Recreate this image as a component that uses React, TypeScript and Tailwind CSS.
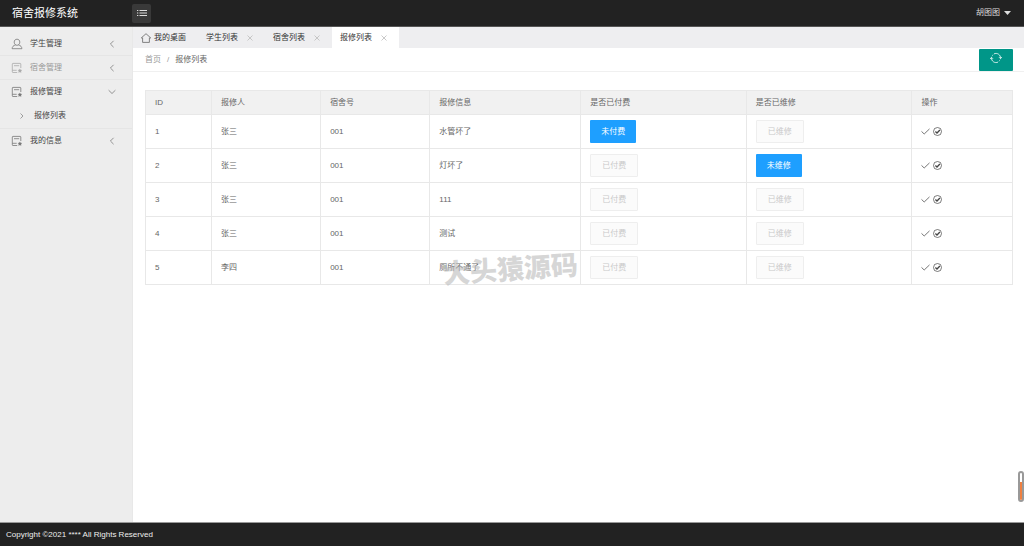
import React, { useState } from 'react';

interface Repair {
  id: number;
  student: string;
  room: string;
  info: string;
  paid: boolean;
  fixed: boolean;
}

const initialRepairs: Repair[] = [
  { id: 1, student: '张三', room: '001', info: '水管坏了', paid: false, fixed: true },
  { id: 2, student: '张三', room: '001', info: '灯坏了', paid: true, fixed: false },
  { id: 3, student: '张三', room: '001', info: '111', paid: true, fixed: true },
  { id: 4, student: '张三', room: '001', info: '测试', paid: true, fixed: true },
  { id: 5, student: '李四', room: '001', info: '厕所不通了', paid: true, fixed: true },
];

const columns = [
  { title: 'ID', width: 'w-[7.6%]' },
  { title: '报修人', width: 'w-[12.6%]' },
  { title: '宿舍号', width: 'w-[12.6%]' },
  { title: '报修信息', width: 'w-[17.4%]' },
  { title: '是否已付费', width: 'w-[19.1%]' },
  { title: '是否已维修', width: 'w-[19.1%]' },
  { title: '操作', width: 'w-[11.6%]' },
];

const UserIcon = () => (
  <svg className="size-3" viewBox="0 0 12 12" fill="none" stroke="currentColor" strokeWidth="0.8">
    <path d="M6 1.200c1.700 0 2.800 1.200 2.800 2.900S7.700 7.300 6 7.300 3.200 5.800 3.200 4.100 4.300 1.200 6 1.200z" />
    <path d="M4.500 6.900C2.300 7.500 1.200 8.800 1.100 10.700h9.800c-.1-1.900-1.200-3.200-3.400-3.800" />
  </svg>
);

const FormIcon = () => (
  <svg className="size-3" viewBox="0 0 12 12" fill="none" stroke="currentColor" strokeWidth="0.8">
    <path d="M6.200 10.500H1.900a.6.6 0 0 1-.6-.6V2a.6.6 0 0 1 .6-.6h7.300a.6.6 0 0 1 .6.600v4" />
    <path d="M3 3.700h5.200M1.300 8.300h4.400" />
    <path d="M8.900 6.900l.6 1.100 1.300.2-.9.900.2 1.300-1.200-.6-1.200.6.2-1.300-.9-.9 1.300-.2z" fill="currentColor" strokeWidth="0.4" />
  </svg>
);

const HomeIcon = () => (
  <svg className="size-3" viewBox="0 0 12 12" fill="none" stroke="#666" strokeWidth="0.8">
    <path d="M1.300 5.900 6 1.700l4.700 4.200H9.400v4.500H2.600V5.900z" strokeLinejoin="round" />
  </svg>
);

const CloseIcon = () => (
  <svg className="size-2" viewBox="0 0 8 8" fill="none" stroke="currentColor" strokeWidth="0.8">
    <path d="M1.500 1.500l5 5M6.500 1.500l-5 5" />
  </svg>
);

const Chevron = ({ open = false }: { open?: boolean }) => (
  <svg className="size-2" viewBox="0 0 8 8" fill="none" stroke="#888" strokeWidth="0.9">
    <path d={open ? 'M.6 2.200 4 5.500l3.400-3.300' : 'M5.600.8 2.400 4l3.200 3.200'} />
  </svg>
);

const ListIcon = () => (
  <svg className="h-2 w-[10px]" viewBox="0 0 10 8" fill="none" stroke="currentColor" strokeWidth="1">
    <path d="M2.500 1.500H10M2.500 4H10M2.500 6.500H10M0 1.500h1.300M0 4h1.300M0 6.500h1.300" />
  </svg>
);

const RefreshIcon = () => (
  <svg className="size-3" viewBox="0 0 12 12" fill="none" stroke="currentColor" strokeWidth="0.8">
    <path d="M4 1.900a4.500 4.500 0 0 1 6.500 4.300M8 10.100A4.500 4.500 0 0 1 1.500 5.800" />
    <path d="M9 5.200l1.500 1.500 1.300-1.600M.2 6.900l1.300-1.600L3 6.800" />
    <path d="M2 4.200 3.100 2.600M10 7.800 8.900 9.400" strokeDasharray="1 0.600" />
  </svg>
);

const CheckIcon = () => (
  <svg className="size-[9px]" viewBox="0 0 9 9" fill="none" stroke="#666" strokeWidth="0.9">
    <path d="M.5 4.400 3.200 7 8.500 1.900" />
  </svg>
);

const CheckCircleIcon = () => (
  <svg className="size-[9px]" viewBox="0 0 9 9" fill="none" stroke="currentColor">
    <circle cx="4.500" cy="4.500" r="4" strokeWidth="0.7" />
    <path d="M2.400 4.500 4 6l2.900-3" strokeWidth="1.300" />
  </svg>
);

const menu = [
  { title: '学生管理', icon: UserIcon, tone: 'text-[#444]', iconTone: 'text-[#777]' },
  { title: '宿舍管理', icon: FormIcon, tone: 'text-[#999]', iconTone: 'text-[#aaa]' },
  { title: '报修管理', icon: FormIcon, tone: 'text-[#444]', iconTone: 'text-[#777]', children: ['报修列表'] },
  { title: '我的信息', icon: FormIcon, tone: 'text-[#444]', iconTone: 'text-[#777]' },
];

interface StatusButtonProps {
  done: boolean;
  doneText: string;
  todoText: string;
  onClick: () => void;
}

const StatusButton: React.FC<StatusButtonProps> = ({ done, doneText, todoText, onClick }) =>
  done ? (
    <button disabled className="block h-[23px] rounded-[1px] border border-[#eee] bg-[#fbfbfb] px-[11px] text-[#c9c9c9]">
      {doneText}
    </button>
  ) : (
    <button onClick={onClick} className="block h-[23px] rounded-[1px] bg-[#1e9fff] px-[11px] text-white">
      {todoText}
    </button>
  );

const Sidebar = () => {
  const [opened, setOpened] = useState('报修管理');

  return (
    <nav className="w-[133px] shrink-0 border-r border-[#e8e8e8] bg-[#ededed] pt-[5px]">
      <ul>
        {menu.map((item) => (
          <li key={item.title} className="border-b border-[#e5e5e5] last:border-b-0">
            <button
              onClick={() => setOpened(opened === item.title ? '' : item.title)}
              className={`flex h-[23px] w-full items-center pr-4 pl-[11px] ${item.tone}`}
            >
              <span className={item.iconTone}>
                <item.icon />
              </span>
              <span className="ml-[7px] flex-1 text-left">{item.title}</span>
              <Chevron open={opened === item.title} />
            </button>
            {item.children && opened === item.title && (
              <ul>
                {item.children.map((child) => (
                  <li key={child}>
                    <a href="#" className="flex h-[25px] items-center gap-2 pl-[18px] text-[#444]">
                      <svg className="size-2" viewBox="0 0 8 8" fill="none" stroke="#888" strokeWidth="0.8">
                        <path d="M2.500 1.500 5 4 2.500 6.500" />
                      </svg>
                      {child}
                    </a>
                  </li>
                ))}
              </ul>
            )}
          </li>
        ))}
      </ul>
    </nav>
  );
};

const Tabs = () => {
  const [tabs, setTabs] = useState(['学生列表', '宿舍列表', '报修列表']);
  const [active, setActive] = useState('报修列表');

  return (
    <div className="flex h-[21px] bg-[#eeeef0] pl-[3px] text-[#333]">
      <button onClick={() => setActive('')} className="flex items-center gap-[2px] px-1">
        <HomeIcon />
        我的桌面
      </button>
      <div className="flex pl-2">
        {tabs.map((tab) => (
          <div key={tab} className={`flex w-[67px] items-center gap-2 pl-2 ${tab === active ? 'bg-white' : ''}`}>
            <button onClick={() => setActive(tab)}>{tab}</button>
            <button
              aria-label={`关闭${tab}`}
              onClick={() => setTabs(tabs.filter((t) => t !== tab))}
              className="text-[#bbb]"
            >
              <CloseIcon />
            </button>
          </div>
        ))}
      </div>
    </div>
  );
};

const App: React.FC = () => {
  const [repairs, setRepairs] = useState(initialRepairs);

  const update = (id: number, patch: Partial<Repair>) => {
    setRepairs(repairs.map((r) => (r.id === id ? { ...r, ...patch } : r)));
  };

  return (
    <div className="relative flex min-h-screen flex-col bg-white font-['Liberation_Sans','Noto_Sans_CJK_SC',sans-serif] text-[8px] leading-3 text-[#666]">
      <header className="flex h-[27px] items-center border-b border-[#555] bg-[#222] text-white">
        <h1 className="w-[132px] pl-3 text-[11px]">宿舍报修系统</h1>
        <button aria-label="菜单" className="flex h-[19px] w-[19px] items-center justify-center rounded-[2px] bg-[#393939] text-[#ddd]">
          <ListIcon />
        </button>
        <button className="mr-[13px] ml-auto flex items-center gap-1 text-[#ddd]">
          胡图图
          <svg className="h-1 w-[7px]" viewBox="0 0 7 4" fill="currentColor">
            <path d="M0 0h7L3.500 4z" />
          </svg>
        </button>
      </header>

      <div className="flex flex-1">
        <Sidebar />
        <main className="min-w-0 flex-1">
          <Tabs />
          <div className="flex h-6 items-center justify-between border-b border-[#f0f0f0] pr-[11px] pl-3">
            <div className="flex gap-[6px]">
              <a href="#" className="text-[#999]">首页</a>
              <span className="text-[#999]">/</span>
              <a href="#">报修列表</a>
            </div>
            <button aria-label="刷新" className="flex h-[22px] w-[34px] items-start justify-center rounded-[1px] bg-[#009688] pt-[3px] text-white">
              <RefreshIcon />
            </button>
          </div>

          <div className="relative pt-[18px] pr-[11px] pl-3">
            <table className="w-full table-fixed border-collapse border border-[#e8e8e8] text-left">
              <thead>
                <tr className="h-6 bg-[#f1f1f1]">
                  {columns.map((col) => (
                    <th key={col.title} className={`border border-[#e8e8e8] px-[9px] font-normal ${col.width}`}>
                      {col.title}
                    </th>
                  ))}
                </tr>
              </thead>
              <tbody>
                {repairs.map((r) => (
                  <tr key={r.id} className="h-[34px] border-b border-[#e8e8e8] [&>td]:border-r [&>td]:border-[#e8e8e8] [&>td]:px-[9px]">
                    <td>{r.id}</td>
                    <td>{r.student}</td>
                    <td>{r.room}</td>
                    <td>{r.info}</td>
                    <td>
                      <StatusButton
                        done={r.paid}
                        doneText="已付费"
                        todoText="未付费"
                        onClick={() => update(r.id, { paid: true })}
                      />
                    </td>
                    <td>
                      <StatusButton
                        done={r.fixed}
                        doneText="已维修"
                        todoText="未维修"
                        onClick={() => update(r.id, { fixed: true })}
                      />
                    </td>
                    <td>
                      <div className="flex gap-[3px] text-[#444]">
                        <button aria-label="付费" onClick={() => update(r.id, { paid: true })}>
                          <CheckIcon />
                        </button>
                        <button aria-label="维修" onClick={() => update(r.id, { fixed: true })}>
                          <CheckCircleIcon />
                        </button>
                      </div>
                    </td>
                  </tr>
                ))}
              </tbody>
            </table>
            <div className="pointer-events-none absolute top-[182px] left-[310px] -rotate-4 text-[27px] leading-8 font-black whitespace-nowrap text-[#bbb]/60">
              大头猿源码
            </div>
          </div>
        </main>
      </div>

      <footer className="flex h-6 items-center border-t border-[#999] bg-[#222] pt-px pl-[6px] text-[#eee]">
        Copyright ©2021 **** All Rights Reserved
      </footer>

      {/* floating scroll progress */}
      <div className="absolute right-0 bottom-11 flex h-[31px] w-[6px] flex-col justify-end overflow-hidden rounded-[3px] border-2 border-[#999] bg-white">
        <div className="h-[18px] bg-[#f08040]" />
      </div>
    </div>
  );
};

export default App;
